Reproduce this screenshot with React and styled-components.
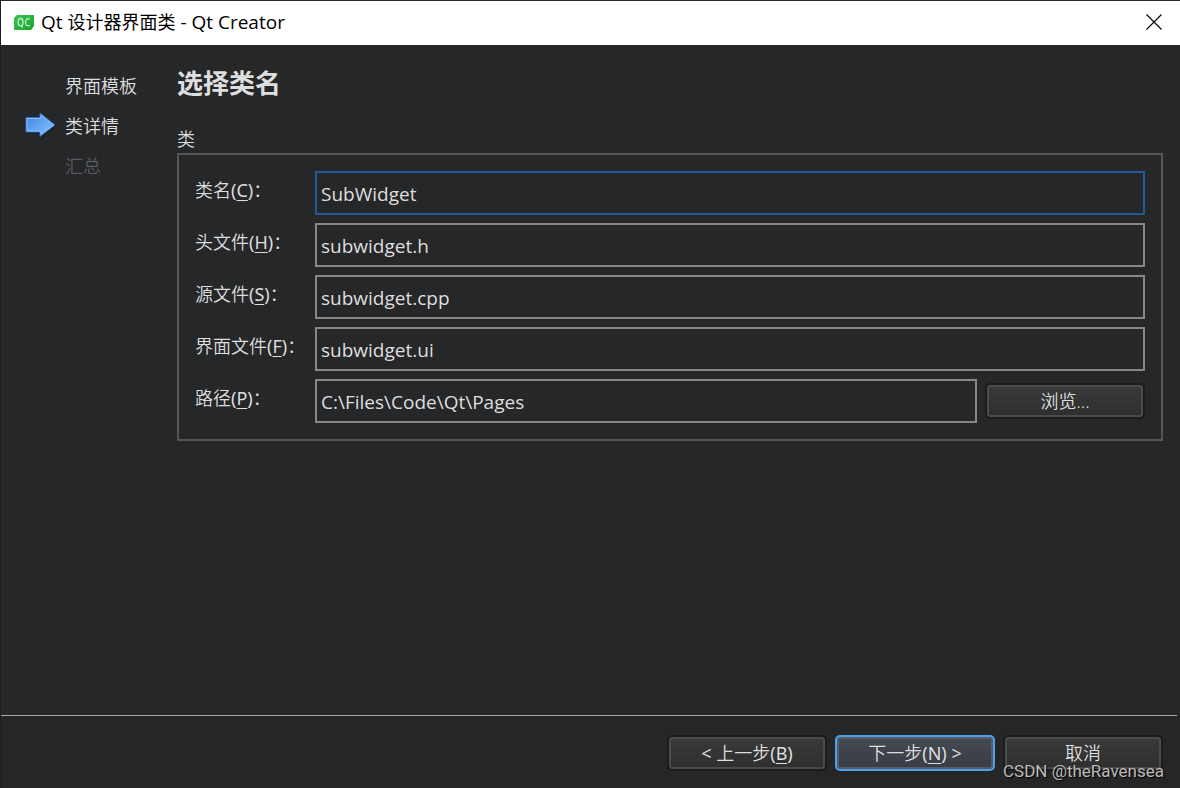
import React from "react";
import styled, { createGlobalStyle, css } from "styled-components";

const GlobalStyle = createGlobalStyle`
  *, *::before, *::after { box-sizing: border-box; }
  body {
    margin: 0;
    background: #262729;
    color: #dedede;
    font-family: "Noto Sans", "Noto Sans CJK SC", sans-serif;
    font-size: 18px;
    line-height: 24px;
  }
  button, input { font: inherit; color: inherit; }
`;

const Dialog = styled.div`
  position: relative;
  display: flex;
  flex-direction: column;
  min-height: 100vh;
  border-left: 1px solid #1f1f21;
`;

const TitleBar = styled.header`
  display: flex;
  align-items: center;
  gap: 7px;
  height: 45px;
  padding: 0 18px 2px 13px;
  border-top: 1px solid #2b2b2d;
  background: #ffffff;
  color: #000000;
`;

const WindowTitle = styled.span`
  flex: 1;
`;

const TitleLatin = styled.span`
  font-family: "Open Sans", sans-serif;
  font-size: 19px;
`;

const CloseButton = styled.button`
  display: flex;
  padding: 0;
  border: 0;
  background: none;
`;

const Content = styled.div`
  display: flex;
  flex: 1;
  padding: 21px 17px 0 24px;
`;

const Steps = styled.ol`
  flex: none;
  width: 152px;
  margin: 0;
  padding: 0;
  list-style: none;
`;

const Step = styled.li`
  display: flex;
  align-items: center;
  height: 40px;
  padding-left: ${(p) => (p.$current ? 0 : 40)}px;
  color: ${(p) => (p.$pending ? "#5a5b5d" : "inherit")};
  font-weight: 350;
`;

const ArrowSlot = styled.span`
  display: flex;
  width: 40px;
`;

const Page = styled.main`
  flex: 1;
  min-width: 0;
`;

const Heading = styled.h1`
  margin: 0;
  font-size: 26px;
  line-height: 34px;
  font-weight: 700;
`;

const Group = styled.div`
  margin-top: 27px;
`;

const GroupTitle = styled.div`
  height: 26px;
  font-weight: 350;
`;

const Form = styled.form`
  display: flex;
  flex-direction: column;
  gap: 8px;
  padding: 16px;
  border: 2px solid #545557;
`;

const Row = styled.div`
  display: flex;
  align-items: center;
  gap: 8px;
`;

const Label = styled.label`
  flex: none;
  align-self: flex-start;
  width: 112px;
  line-height: 38px;
  font-weight: 350;
  white-space: nowrap;
`;

const TextBox = styled.input`
  flex: 1;
  min-width: 0;
  height: 44px;
  padding: 2px 4px 0;
  border: 2px solid ${(p) => (p.$active ? "#215a96" : "#868788")};
  border-radius: 0;
  outline: none;
  background: transparent;
  font-family: "Open Sans", "Noto Sans CJK SC", sans-serif;
  font-size: 19px;
`;

const accent = css`
  border-color: #4d9ff0;
  background: linear-gradient(#454b54, #383c43);
  box-shadow: inset 0 0 0 2px #555d67;
`;

const Button = styled.button`
  flex: none;
  width: 160px;
  height: 36px;
  padding: 0;
  border: 2px solid #1c1c1d;
  border-radius: 5px;
  background: linear-gradient(#3a3a3a, #2e2e2e);
  box-shadow: inset 0 0 0 2px #4b4b4b;
  font-weight: 350;
  ${(p) => p.$default && accent}
`;

const Latin = styled.span`
  font-weight: 400;
`;

const Key = styled.span`
  text-decoration: underline;
  text-decoration-thickness: 1px;
  text-underline-offset: 3px;
`;

const Mnemonic = ({ letter }) => (
  <Latin>
    (<Key>{letter}</Key>)
  </Latin>
);

const Footer = styled.footer`
  display: flex;
  justify-content: flex-end;
  gap: 8px;
  margin-right: 3px;
  padding: 19px 14px 17px;
  border-top: 1px solid #a5a5a5;
`;

const FooterBand = styled.div`
  background: #262626;
`;

const Watermark = styled.span`
  position: absolute;
  right: 16px;
  bottom: 5px;
  color: #bcbcbc;
  font-family: Roboto, sans-serif;
  font-size: 17px;
  text-shadow: 1px 1px 1px #000000;
  pointer-events: none;
`;

const AppLogo = () => (
  <svg width="20" height="15" viewBox="0 0 20 15" aria-hidden="true">
    <defs>
      <linearGradient id="logo" x1="0" y1="0" x2="1" y2="1">
        <stop offset="0" stopColor="#35c653" />
        <stop offset="1" stopColor="#1fa030" />
      </linearGradient>
    </defs>
    <path d="M3 0H20V11L17 15H0V3Z" fill="url(#logo)" />
    <path
      d="M6.500 3.500C4.700 3.500 4.100 5.100 4.100 7.200S4.800 10.900 6.500 10.900 9 9.300 9 7.200 8.300 3.500 6.500 3.500ZM7 10.900L8.700 12.500M15.800 4.200C13.200 3 11.500 4.400 11.500 7.200S13.200 11.400 15.900 10.300"
      fill="none"
      stroke="#c5f0cb"
      strokeWidth="1.300"
    />
  </svg>
);

const CloseIcon = () => (
  <svg width="16" height="16" viewBox="0 0 16 16" aria-hidden="true">
    <path d="M.5 .5L15.500 15.500M15.500 .5L.5 15.500" stroke="#000" strokeWidth="1.100" />
  </svg>
);

const CurrentArrow = () => (
  <svg width="32" height="28" viewBox="0 0 32 28" aria-hidden="true">
    <defs>
      <linearGradient id="arrow" x1="0" y1="0" x2="1" y2="1">
        <stop offset="0" stopColor="#3f83e4" />
        <stop offset="1" stopColor="#8cc4ff" />
      </linearGradient>
    </defs>
    <path d="M1 8H15V3L31 14L16 27V22H2Z" fill="#1c2129" />
    <path
      d="M1 5.500H15V1L30 13L15 24.500V20H1Z"
      fill="url(#arrow)"
      stroke="#2f69bd"
      strokeWidth="1"
    />
    <path d="M2 6.500H16V3L28.500 13L16 22.500V19H2Z" fill="none" stroke="#8abcf8" strokeWidth="1" />
  </svg>
);

const fields = [
  { id: "class", label: "类名", key: "C", value: "SubWidget", active: true },
  { id: "header", label: "头文件", key: "H", value: "subwidget.h" },
  { id: "source", label: "源文件", key: "S", value: "subwidget.cpp" },
  { id: "form", label: "界面文件", key: "F", value: "subwidget.ui" },
  { id: "path", label: "路径", key: "P", value: "C:\\Files\\Code\\Qt\\Pages", browse: true },
];

export default function App() {
  return (
    <Dialog lang="zh-CN">
      <GlobalStyle />
      <TitleBar>
        <AppLogo />
        <WindowTitle>
          <TitleLatin>Qt </TitleLatin>设计器界面类<TitleLatin> - Qt Creator</TitleLatin>
        </WindowTitle>
        <CloseButton type="button" aria-label="关闭">
          <CloseIcon />
        </CloseButton>
      </TitleBar>
      <Content>
        <Steps>
          <Step>界面模板</Step>
          <Step $current aria-current="step">
            <ArrowSlot>
              <CurrentArrow />
            </ArrowSlot>
            类详情
          </Step>
          <Step $pending>汇总</Step>
        </Steps>
        <Page>
          <Heading>选择类名</Heading>
          <Group>
            <GroupTitle>类</GroupTitle>
            <Form onSubmit={(e) => e.preventDefault()}>
              {fields.map((f) => (
                <Row key={f.id}>
                  <Label htmlFor={f.id}>
                    {f.label}
                    <Mnemonic letter={f.key} />：
                  </Label>
                  <TextBox id={f.id} $active={f.active} defaultValue={f.value} spellCheck={false} />
                  {f.browse && <Button type="button">浏览...</Button>}
                </Row>
              ))}
            </Form>
          </Group>
        </Page>
      </Content>
      <FooterBand>
        <Footer>
          <Button type="button">
            <Latin>&lt; </Latin>上一步
            <Mnemonic letter="B" />
          </Button>
          <Button type="button" $default>
            下一步
            <Mnemonic letter="N" />
            <Latin> &gt;</Latin>
          </Button>
          <Button type="button">取消</Button>
        </Footer>
      </FooterBand>
      <Watermark>CSDN @theRavensea</Watermark>
    </Dialog>
  );
}
